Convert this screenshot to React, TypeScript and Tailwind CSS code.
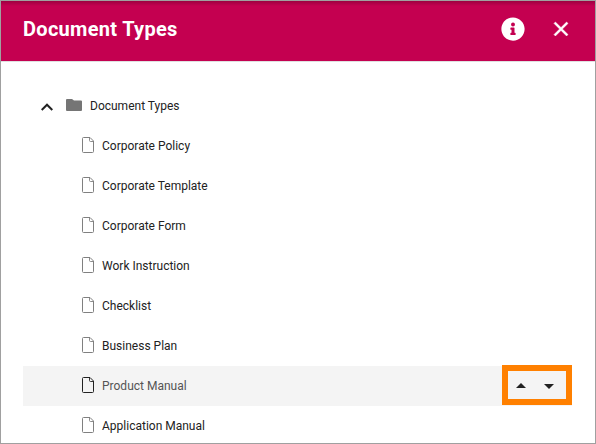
const documentTypes = [
  'Corporate Policy',
  'Corporate Template',
  'Corporate Form',
  'Work Instruction',
  'Checklist',
  'Business Plan',
  'Product Manual',
  'Application Manual',
];

function FileIcon({ active }: { active: boolean }) {
  return (
    <svg
      viewBox="0 0 12 16"
      className={`mt-[-2px] h-4 w-3 shrink-0 ${active ? 'text-[#222222]' : 'text-[#808080]'}`}
      fill="none"
      stroke="currentColor"
    >
      <path d="M1.500 .5H8L11.500 4V14.500a1 1 0 0 1-1 1h-9a1 1 0 0 1-1-1v-13a1 1 0 0 1 1-1z" />
      <path d="M7.500 .5V3.500a1 1 0 0 0 1 1H11.500" strokeWidth=".9" />
    </svg>
  );
}

function Header() {
  return (
    <header className="flex h-[61px] shrink-0 items-center border-b border-[#e0e0e0] bg-[#c40050] bg-linear-to-b from-black/20 via-transparent via-[5px] to-transparent px-[22px] text-white">
      <h1 className="mt-[-4px] flex-1 text-[20px] leading-6 font-bold tracking-[0.3px]">Document Types</h1>
      <svg viewBox="0 0 512 512" className="mt-[-4px] h-6 w-6" fill="currentColor">
        <path d="M256 8C119 8 8 119 8 256s111 248 248 248 248-111 248-248S393 8 256 8zm0 110a42 42 0 1 1 0 84 42 42 0 0 1 0-84zm56 254c0 6.600-5.400 12-12 12h-88c-6.600 0-12-5.400-12-12v-24c0-6.600 5.400-12 12-12h12v-64h-12c-6.600 0-12-5.400-12-12v-24c0-6.600 5.400-12 12-12h64c6.600 0 12 5.400 12 12v100h12c6.600 0 12 5.400 12 12v24z" />
      </svg>
      <svg viewBox="0 0 24 24" className="mt-[-4px] ml-6 h-6 w-6" fill="currentColor" stroke="currentColor" strokeWidth=".5">
        <path d="M19 6.410L17.590 5 12 10.590 6.410 5 5 6.410 10.590 12 5 17.590 6.410 19 12 13.410 17.590 19 19 17.590 13.410 12z" />
      </svg>
    </header>
  );
}

function MoveButtons() {
  return (
    <div className="mt-[-2px] flex h-10 w-[70px] items-center justify-between border-[6px] border-[#ff8000] pr-[12px] pl-2">
      <svg viewBox="0 0 10 5" className="mt-px h-[5px] w-[10px]" fill="#222222">
        <path d="M0 5L5 0l5 5z" />
      </svg>
      <svg viewBox="0 0 10 5" className="mt-[2px] h-[5px] w-[10px]" fill="#222222">
        <path d="M0 0h10L5 5z" />
      </svg>
    </div>
  );
}

export default function App() {
  return (
    <div
      className="flex h-[444px] w-[596px] flex-col overflow-hidden border border-[#a0a0a0] bg-white text-[12px] text-[#222222]"
      style={{ fontFamily: 'Roboto, sans-serif' }}
    >
      <Header />
      <main className="px-[22px] pt-6">
        <div className="flex h-10 items-center pl-[18px]">
          <svg viewBox="0 0 12 8" className="mt-px h-2 w-3" fill="none" stroke="currentColor" strokeWidth="2">
            <path d="M.7 7L6 1.700 11.300 7" />
          </svg>
          <svg viewBox="0 0 16 12" className="mt-[-2px] ml-[13px] h-3 w-4" fill="#757575">
            <path d="M1 0H6l2 1.500h7A1 1 0 0 1 16 2.500v8.500a1 1 0 0 1-1 1H1A1 1 0 0 1 0 11V1A1 1 0 0 1 1 0z" />
          </svg>
          <span className="ml-2">Document Types</span>
        </div>
        <ul>
          {documentTypes.map((name) => {
            const active = name === 'Product Manual';
            return (
              <li
                key={name}
                className={`flex h-10 w-[549px] items-center pl-[59px] ${active ? 'bg-[#f4f4f4] text-[#555555]' : ''}`}
              >
                <FileIcon active={active} />
                <span className="ml-2 flex-1">{name}</span>
                {active && <MoveButtons />}
              </li>
            );
          })}
        </ul>
      </main>
    </div>
  );
}
